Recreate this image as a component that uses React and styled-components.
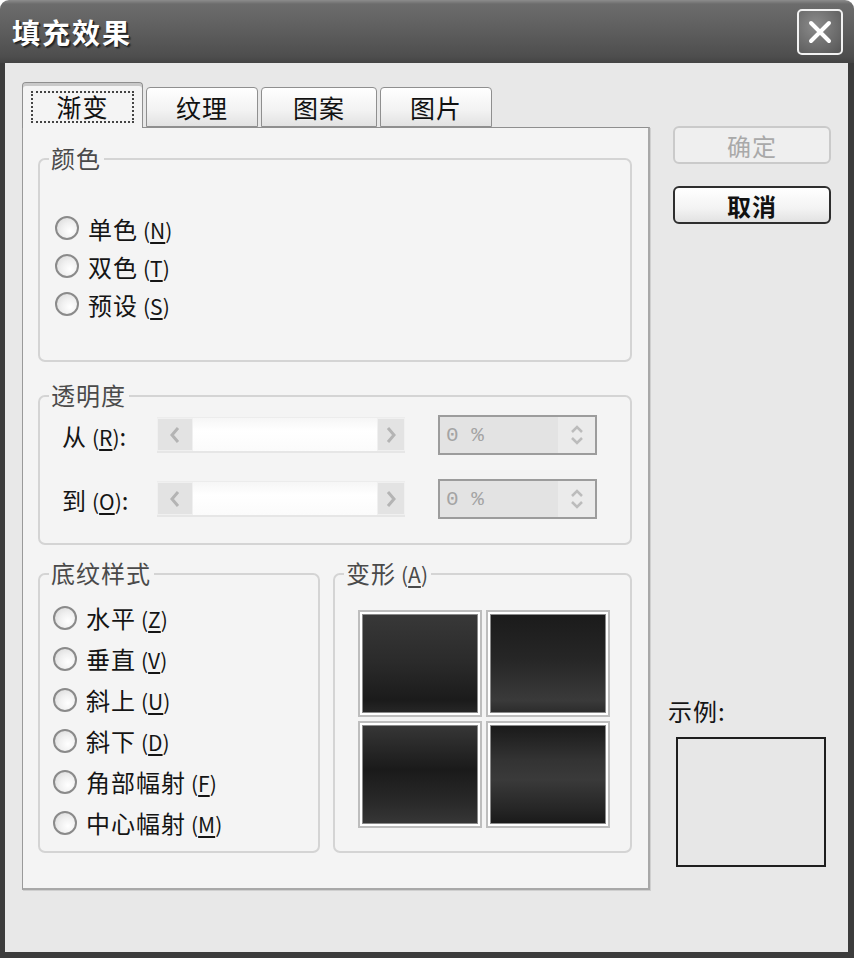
import React from 'react';
import styled, { createGlobalStyle } from 'styled-components';

const GlobalStyle = createGlobalStyle`
  html, body {
    margin: 0;
    padding: 0;
    background: #ffffff;
  }
  * {
    box-sizing: border-box;
  }
`;

const FONT = `"Noto Sans CJK SC", "Noto Sans", sans-serif`;

const Window = styled.div`
  width: 854px;
  height: 958px;
  display: flex;
  flex-direction: column;
  border-radius: 9px 9px 0 0;
  overflow: hidden;
  font-family: ${FONT};
  color: #111;
`;

const TitleBar = styled.div`
  height: 63px;
  flex: none;
  display: flex;
  align-items: center;
  justify-content: space-between;
  padding: 0 11px 0 12px;
  background: linear-gradient(#8c8c8c 0px, #6c6c6c 4px, #5e5e5e 30px, #4e4e4e 56px, #444 63px);
`;

const Title = styled.div`
  font-size: 28px;
  font-weight: 700;
  color: #fff;
  letter-spacing: 2px;
  text-shadow: 1px 1px 0 #1e1e1e, 2px 2px 1px #333;
`;

const CloseButton = styled.button`
  width: 46px;
  height: 46px;
  padding: 0;
  border: 2px solid #f2f2f2;
  border-radius: 5px;
  background: radial-gradient(circle at 40% 35%, #8c8c8c, #666 70%, #555);
  display: flex;
  align-items: center;
  justify-content: center;
`;

const Frame = styled.div`
  flex: 1;
  display: flex;
  flex-direction: column;
  border-left: 5px solid #3c3c3c;
  border-right: 6px solid #3c3c3c;
  border-bottom: 6px solid #3c3c3c;
  background: #e8e8e8;
  padding: 19px 0 0 17px;
`;

const Content = styled.div`
  display: flex;
`;

const LeftColumn = styled.div`
  width: 628px;
  display: flex;
  flex-direction: column;
`;

const TabStrip = styled.div`
  display: flex;
  align-items: flex-end;
  gap: 3px;
  position: relative;
  z-index: 1;
`;

const Tab = styled.div`
  width: ${p => p.w}px;
  height: ${p => (p.active ? 46 : 40)}px;
  margin-bottom: ${p => (p.active ? -1 : 0)}px;
  border: 1px solid #8f8f8f;
  border-bottom: ${p => (p.active ? 'none' : '1px solid #8f8f8f')};
  border-radius: 4px 4px 0 0;
  background: ${p => (p.active ? '#f4f4f4' : 'linear-gradient(#ffffff, #f2f2f2 60%, #e2e2e2)')};
  box-shadow: ${p => (p.active ? 'inset 0 3px 0 #c9c9c9' : 'none')};
  display: flex;
  align-items: center;
  justify-content: center;
  padding-top: ${p => (p.active ? 2 : 0)}px;
  font-size: 25px;
  letter-spacing: 1px;
  color: #111;
`;

const FocusRing = styled.span`
  width: 103px;
  height: 32px;
  border: 2px dotted #444;
  display: flex;
  align-items: center;
  justify-content: center;
  line-height: 1;
`;

const Panel = styled.div`
  height: 763px;
  background: #f4f4f4;
  border-top: 1px solid #8f8f8f;
  border-left: 1px solid #9a9a9a;
  border-right: 2px solid #a8a8a8;
  border-bottom: 2px solid #a8a8a8;
  box-shadow: 1px 1px 0 #cfcfcf;
  padding: 30px 16px 0 15px;
  display: flex;
  flex-direction: column;
`;

const GroupBox = styled.div`
  position: relative;
  height: ${p => p.h}px;
  width: ${p => (p.w ? `${p.w}px` : 'auto')};
  margin-top: ${p => p.mt || 0}px;
  border: 2px solid #d4d4d4;
  border-radius: 7px;
  padding: ${p => p.pad};
`;

const GroupTitle = styled.span`
  position: absolute;
  top: -15px;
  left: 9px;
  padding: 0 3px 0 2px;
  background: #f4f4f4;
  font-size: 24px;
  line-height: 26px;
  color: #4a4a4a;
  letter-spacing: 1px;
`;

const GroupRow = styled.div`
  display: flex;
  gap: 13px;
  margin-top: 28px;
`;

const RadioList = styled.div`
  display: flex;
  flex-direction: column;
`;

const RadioRow = styled.label`
  height: ${p => p.h}px;
  display: flex;
  align-items: center;
  gap: 9px;
  font-size: 24px;
  letter-spacing: 1px;
  color: #151515;
`;

const RadioCircle = styled.span`
  width: 24px;
  height: 24px;
  flex: none;
  border-radius: 50%;
  border: 2px solid #8a8a8a;
  background: radial-gradient(circle at 65% 65%, #ffffff, #f0f0f0 45%, #d6d6d6);
`;

const Key = styled.span`
  font-size: 21px;
  letter-spacing: 0;
  margin-left: 5px;
  u {
    text-underline-offset: 3px;
  }
`;

const SliderRow = styled.div`
  height: 40px;
  display: flex;
  align-items: center;
  margin-bottom: ${p => p.mb || 0}px;
`;

const SliderLabel = styled.span`
  width: 95px;
  flex: none;
  font-size: 24px;
  letter-spacing: 1px;
  color: #151515;
`;

const Scroll = styled.div`
  width: 248px;
  height: 36px;
  display: flex;
  justify-content: space-between;
  background: linear-gradient(#f6f6f6, #ffffff 40%, #fbfbfb);
  border-top: 1px solid #ececec;
  border-bottom: 2px solid #e6e6e6;
`;

const ScrollButton = styled.span`
  width: ${p => p.w}px;
  height: 100%;
  background: #e3e3e3;
  border: 1px solid #f0f0f0;
  display: flex;
  align-items: center;
  justify-content: center;
`;

const Spin = styled.div`
  width: 159px;
  height: 40px;
  margin-left: 33px;
  display: flex;
  border: 2px solid #9c9c9c;
  background: #e3e3e3;
`;

const SpinValue = styled.span`
  flex: 1;
  padding-left: 6px;
  display: flex;
  align-items: center;
  font-family: "Liberation Mono", monospace;
  font-size: 21px;
  color: #a4a4a4;
`;

const SpinButtons = styled.span`
  width: 37px;
  background: #ebebeb;
  display: flex;
  align-items: center;
  justify-content: center;
`;

const TileGrid = styled.div`
  display: grid;
  grid-template-columns: 124px 124px;
  grid-auto-rows: 107px;
  gap: 4px;
`;

const Tile = styled.div`
  border: 2px solid #bdbdbd;
  padding: 2px;
  background: #ffffff;
`;

const TileFill = styled.div`
  height: 100%;
  border: 1px solid #8a8a8a;
  background: ${p => p.fill};
`;

const RightColumn = styled.div`
  width: 180px;
  margin-left: 18px;
  padding: 44px 0 23px 0;
  display: flex;
  flex-direction: column;
`;

const Button = styled.button`
  width: 158px;
  height: 38px;
  margin-left: 5px;
  margin-bottom: 22px;
  border: 2px solid ${p => (p.disabled ? '#cacaca' : '#2e2e2e')};
  border-radius: 6px;
  background: ${p => (p.disabled ? '#efefef' : 'linear-gradient(#ffffff, #f3f3f3 60%, #e2e2e2)')};
  font-family: ${FONT};
  font-size: 24px;
  font-weight: ${p => (p.disabled ? 400 : 700)};
  letter-spacing: 1px;
  color: ${p => (p.disabled ? '#a9a9a9' : '#111')};
  display: flex;
  align-items: center;
  justify-content: center;
  padding: 0;
`;

const Sample = styled.div`
  margin-top: auto;
  display: flex;
  flex-direction: column;
`;

const SampleLabel = styled.span`
  font-size: 24px;
  line-height: 28px;
  letter-spacing: 1px;
  color: #151515;
`;

const SampleBox = styled.div`
  width: 150px;
  height: 130px;
  margin: 12px 0 0 8px;
  border: 2px solid #1e1e1e;
  background: #e7e7e7;
`;

const Chevron = ({ dir }) => (
  <svg width="14" height="20" viewBox="0 0 14 20">
    <path
      d={dir === 'left' ? 'M10 3 L4 10 L10 17' : 'M4 3 L10 10 L4 17'}
      fill="none"
      stroke="#b4b4b4"
      strokeWidth="3"
    />
  </svg>
);

const SpinArrows = () => (
  <svg width="18" height="26" viewBox="0 0 18 26">
    <path d="M4 10 L9 5 L14 10" fill="none" stroke="#bcbcbc" strokeWidth="2.5" />
    <path d="M4 16 L9 21 L14 16" fill="none" stroke="#bcbcbc" strokeWidth="2.5" />
  </svg>
);

const CloseIcon = () => (
  <svg width="26" height="26" viewBox="0 0 26 26">
    <path d="M4 4 L22 22 M22 4 L4 22" stroke="#ffffff" strokeWidth="4" strokeLinecap="round" />
  </svg>
);

const Radio = ({ label, hotkey, h }) => (
  <RadioRow h={h}>
    <RadioCircle />
    <span>
      {label}
      <Key>
        (<u>{hotkey}</u>)
      </Key>
    </span>
  </RadioRow>
);

const SliderLine = ({ label, hotkey, mb }) => (
  <SliderRow mb={mb}>
    <SliderLabel>
      {label}
      <Key>
        (<u>{hotkey}</u>)
      </Key>
      :
    </SliderLabel>
    <Scroll>
      <ScrollButton w={36}>
        <Chevron dir="left" />
      </ScrollButton>
      <ScrollButton w={28}>
        <Chevron dir="right" />
      </ScrollButton>
    </Scroll>
    <Spin>
      <SpinValue>0 %</SpinValue>
      <SpinButtons>
        <SpinArrows />
      </SpinButtons>
    </Spin>
  </SliderRow>
);

const tabs = [
  { name: '渐变', w: 121, active: true },
  { name: '纹理', w: 112 },
  { name: '图案', w: 116 },
  { name: '图片', w: 112 },
];

const colorOptions = [
  { label: '单色', key: 'N' },
  { label: '双色', key: 'T' },
  { label: '预设', key: 'S' },
];

const shadingOptions = [
  { label: '水平', key: 'Z' },
  { label: '垂直', key: 'V' },
  { label: '斜上', key: 'U' },
  { label: '斜下', key: 'D' },
  { label: '角部幅射', key: 'F' },
  { label: '中心幅射', key: 'M' },
];

const variants = [
  'linear-gradient(#383838, #2a2a2a 50%, #1b1b1b 88%, #262626)',
  'linear-gradient(#1b1b1b, #262626 45%, #3a3a3a 88%, #2c2c2c)',
  'linear-gradient(#363636, #1a1a1a 45%, #2a2a2a 80%, #363636)',
  'linear-gradient(#1a1a1a, #333333 35%, #3a3a3a 55%, #262626 85%, #1a1a1a)',
];

function App() {
  return (
    <>
      <GlobalStyle />
      <Window>
        <TitleBar>
          <Title>填充效果</Title>
          <CloseButton>
            <CloseIcon />
          </CloseButton>
        </TitleBar>
        <Frame>
          <Content>
            <LeftColumn>
              <TabStrip>
                {tabs.map(t => (
                  <Tab key={t.name} w={t.w} active={t.active}>
                    {t.active ? <FocusRing>{t.name}</FocusRing> : t.name}
                  </Tab>
                ))}
              </TabStrip>
              <Panel>
                <GroupBox h={204} pad="49px 0 0 15px">
                  <GroupTitle>颜色</GroupTitle>
                  <RadioList>
                    {colorOptions.map(o => (
                      <Radio key={o.key} label={o.label} hotkey={o.key} h={38} />
                    ))}
                  </RadioList>
                </GroupBox>

                <GroupBox h={150} mt={33} pad="18px 0 0 22px">
                  <GroupTitle>透明度</GroupTitle>
                  <SliderLine label="从" hotkey="R" mb={24} />
                  <SliderLine label="到" hotkey="O" />
                </GroupBox>

                <GroupRow>
                  <GroupBox h={280} w={282} pad="22px 0 0 13px">
                    <GroupTitle>底纹样式</GroupTitle>
                    <RadioList>
                      {shadingOptions.map(o => (
                        <Radio key={o.key} label={o.label} hotkey={o.key} h={41} />
                      ))}
                    </RadioList>
                  </GroupBox>
                  <GroupBox h={280} w={299} pad="35px 0 0 23px">
                    <GroupTitle>
                      变形<Key>(<u>A</u>)</Key>
                    </GroupTitle>
                    <TileGrid>
                      {variants.map((v, i) => (
                        <Tile key={i}>
                          <TileFill fill={v} />
                        </Tile>
                      ))}
                    </TileGrid>
                  </GroupBox>
                </GroupRow>
              </Panel>
            </LeftColumn>

            <RightColumn>
              <Button disabled>确定</Button>
              <Button>取消</Button>
              <Sample>
                <SampleLabel>示例:</SampleLabel>
                <SampleBox />
              </Sample>
            </RightColumn>
          </Content>
        </Frame>
      </Window>
    </>
  );
}

export default App;
